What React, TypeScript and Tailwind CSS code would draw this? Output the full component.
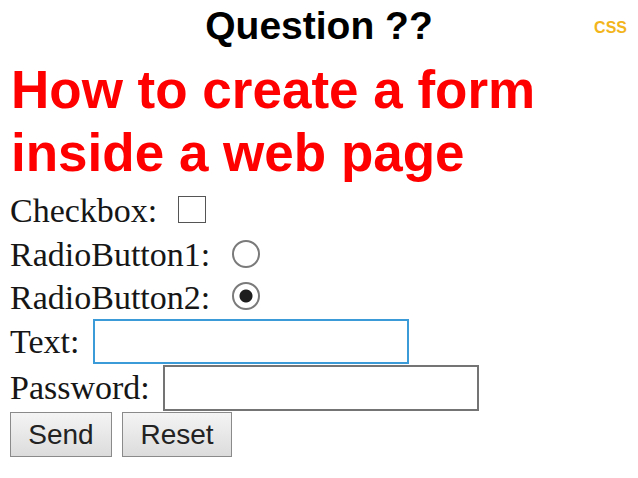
export default function App() {
  return (
    <div className="w-[638px] h-[478px] bg-white overflow-hidden">
      <header className="relative h-[52px] flex justify-center">
        <h1 className="font-['Liberation_Sans',Arial,sans-serif] font-bold text-[39px] leading-[52px] text-black">
          Question ??
        </h1>
        <span className="absolute right-[11px] top-[20px] font-['Liberation_Sans',Arial,sans-serif] font-bold text-[16px] leading-[16px] text-[#f3b51c]">
          CSS
        </span>
      </header>

      <h2 className="mt-[6px] pl-[11px] font-['Liberation_Sans',Arial,sans-serif] font-bold text-[53px] leading-[63px] text-[#ff0000]">
        How to create a form
        <br />
        inside a web page
      </h2>

      <form
        className="mt-[5px] pl-[10px] flex flex-col font-['Liberation_Serif','Times_New_Roman',serif] text-[34px] leading-[34px] text-[#161616]"
        onSubmit={(e) => e.preventDefault()}
      >
        <label className="h-[44px] flex items-center">
          <span>Checkbox:</span>
          <input
            type="checkbox"
            className="ml-[21px] -mt-[4px] appearance-none w-[28px] h-[27px] border-[1.5px] border-[#555] bg-white"
          />
        </label>
        <label className="h-[43px] flex items-center">
          <span>RadioButton1:</span>
          <input
            type="radio"
            name="rb"
            className="ml-[22px] -mt-[1px] appearance-none w-[28px] h-[28px] rounded-full border-2 border-[#7a7a7a] bg-white"
          />
        </label>
        <label className="h-[43px] flex items-center">
          <span>RadioButton2:</span>
          <input
            type="radio"
            name="rb"
            defaultChecked
            className="ml-[22px] -mt-[3px] appearance-none w-[28px] h-[28px] rounded-full border-2 border-[#7a7a7a] bg-white checked:bg-[radial-gradient(circle,#1e1e1e_0_6px,#fff_7px)]"
          />
        </label>
        <label className="h-[45px] flex items-center">
          <span>Text:</span>
          <input
            type="text"
            className="ml-[14px] w-[316px] h-[45px] border-2 border-[#3a9bd8] bg-white outline-none"
          />
        </label>
        <label className="h-[47px] flex items-center">
          <span>Password:</span>
          <input
            type="password"
            className="ml-[13px] w-[316px] h-[46px] border-2 border-[#747474] bg-white outline-none"
          />
        </label>
        <div className="mt-[1px] flex gap-[10px]">
          <button
            type="submit"
            className="w-[102px] h-[45px] border-[1.5px] border-[#8a8a8a] bg-gradient-to-b from-[#f4f4f4] to-[#dcdcdc] font-['Liberation_Sans',Arial,sans-serif] text-[28px] leading-[28px] text-[#222]"
          >
            Send
          </button>
          <button
            type="reset"
            className="w-[110px] h-[45px] border-[1.5px] border-[#8a8a8a] bg-gradient-to-b from-[#f4f4f4] to-[#dcdcdc] font-['Liberation_Sans',Arial,sans-serif] text-[28px] leading-[28px] text-[#222]"
          >
            Reset
          </button>
        </div>
      </form>
    </div>
  );
}
